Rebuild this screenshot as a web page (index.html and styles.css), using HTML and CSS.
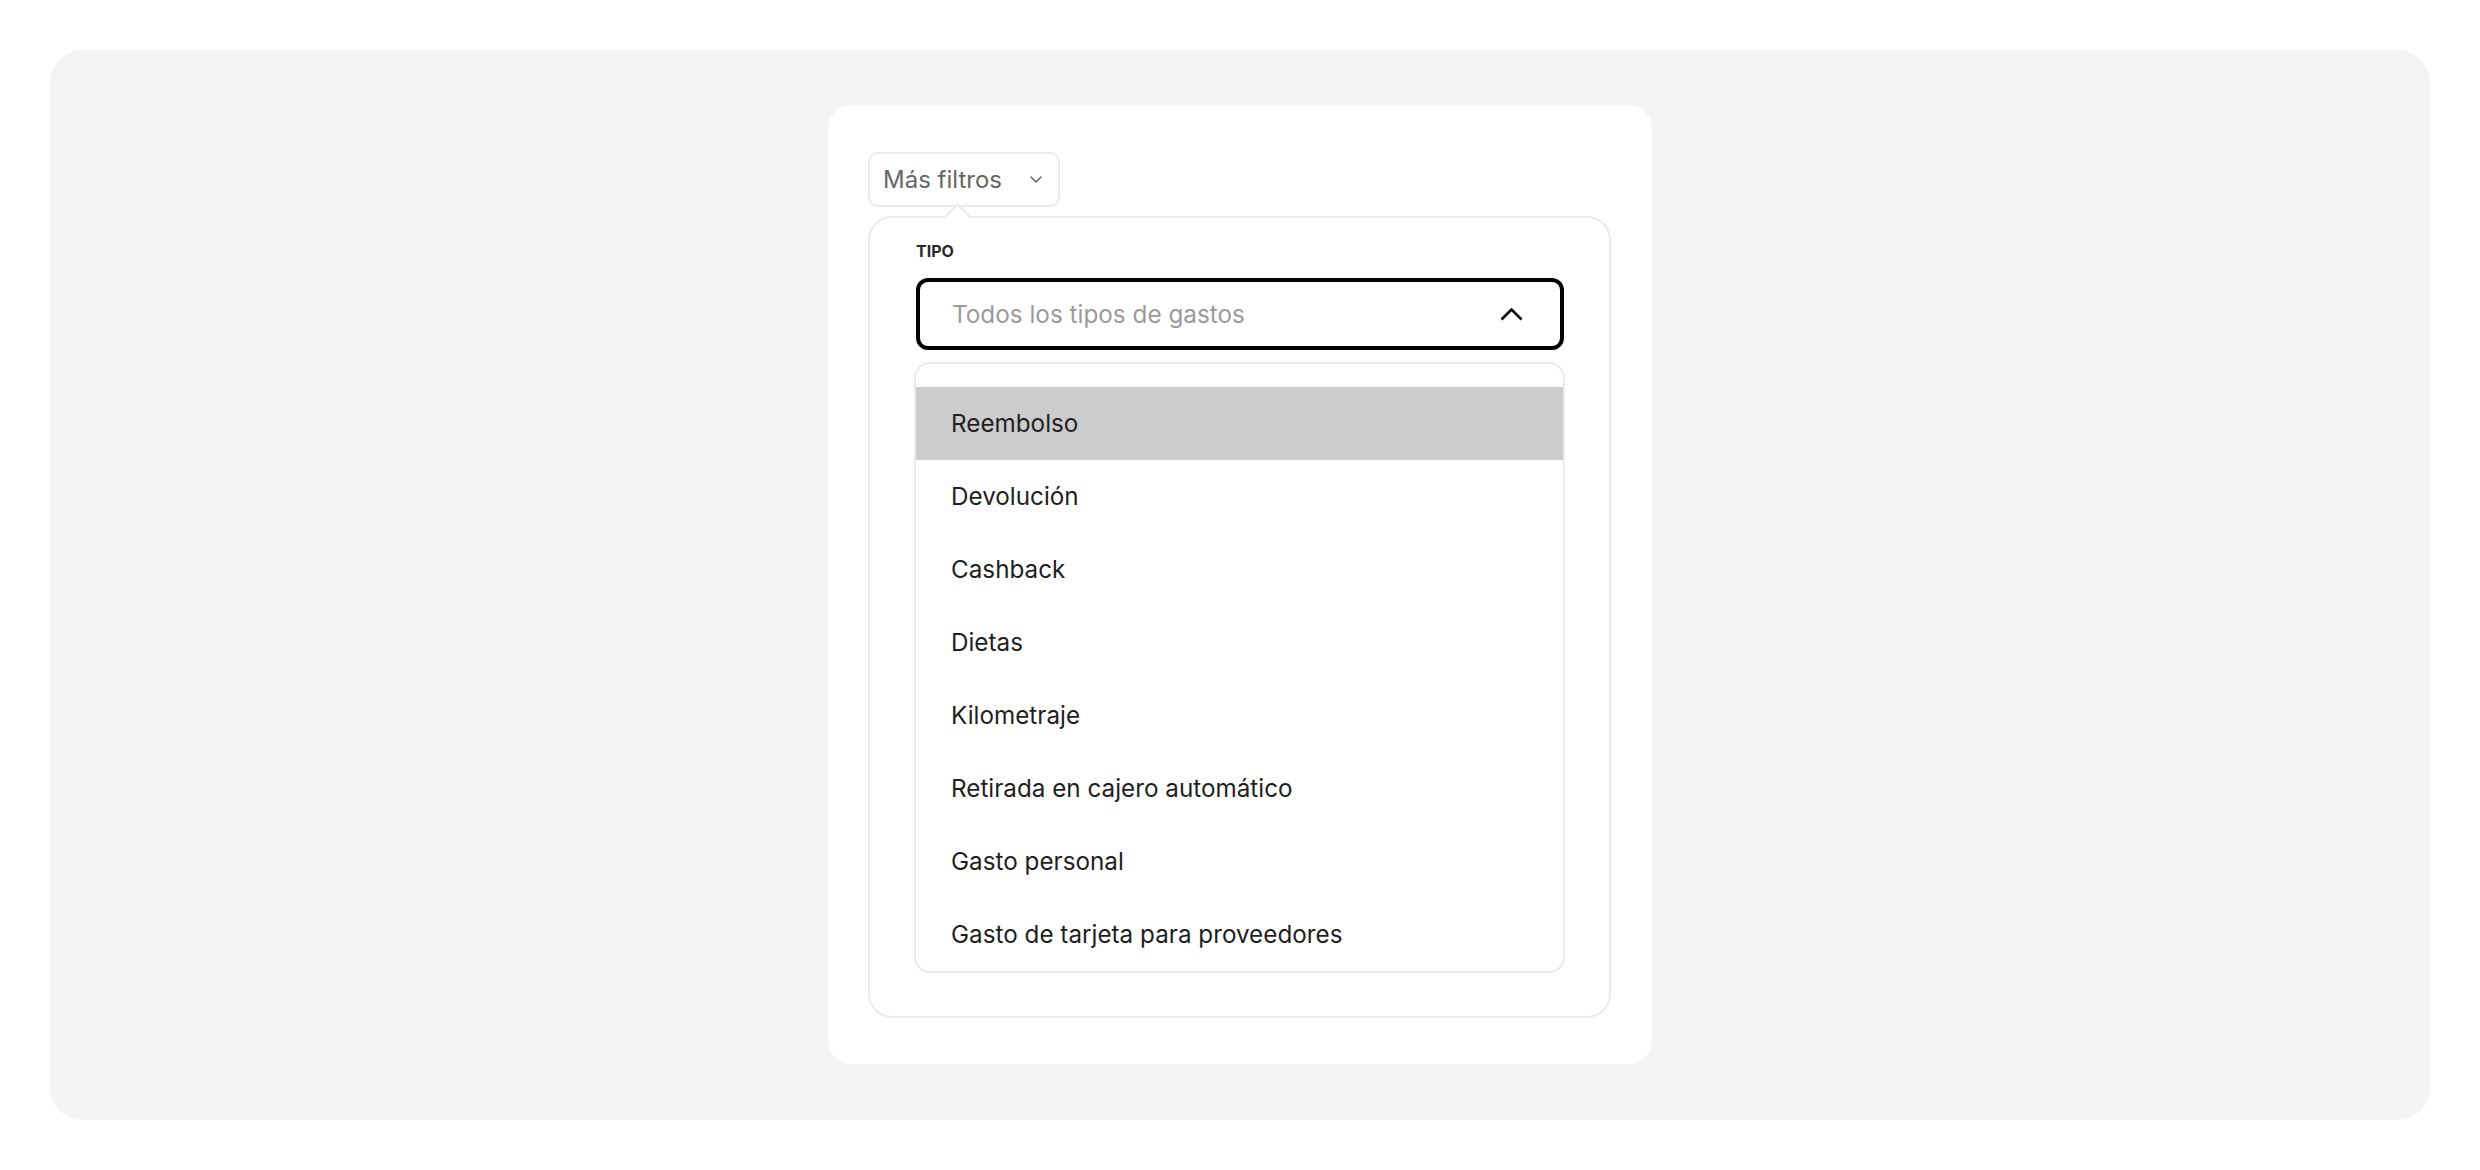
FILE: index.html
```html
<!DOCTYPE html>
<html lang="es">
<head>
<meta charset="utf-8">
<title>Más filtros</title>
<link rel="stylesheet" href="styles.css">
</head>
<body>
<div class="stage">
  <div class="card">
    <button class="trigger" type="button">
      <span class="trigger-label">Más filtros</span>
      <svg class="trigger-chevron" width="12" height="7" viewBox="0 0 12 7" aria-hidden="true"><path d="M1 1l5 5 5-5" fill="none" stroke="#666" stroke-width="1.5" stroke-linecap="round" stroke-linejoin="round"/></svg>
    </button>
    <div class="popover">
      <span class="popover-arrow"></span>
      <div class="field-label">TIPO</div>
      <div class="select">
        <span class="select-placeholder">Todos los tipos de gastos</span>
        <svg class="select-chevron" width="23" height="13" viewBox="0 0 23 13" aria-hidden="true"><path d="M1.5 11.5l10-10 10 10" fill="none" stroke="#000" stroke-width="2.6" stroke-linecap="butt" stroke-linejoin="miter"/></svg>
      </div>
      <ul class="listbox">
        <li class="option is-active">Reembolso</li>
        <li class="option">Devolución</li>
        <li class="option">Cashback</li>
        <li class="option">Dietas</li>
        <li class="option">Kilometraje</li>
        <li class="option">Retirada en cajero automático</li>
        <li class="option">Gasto personal</li>
        <li class="option">Gasto de tarjeta para proveedores</li>
      </ul>
    </div>
  </div>
</div>
</body>
</html>
```

FILE: styles.css
```css
* { box-sizing: border-box; }

html, body {
  margin: 0;
  padding: 0;
  background: #ffffff;
  font-family: Inter, "Noto Sans", "Liberation Sans", sans-serif;
}

.stage {
  margin: 50px;
  height: 1070px;
  background: #f4f4f4;
  border-radius: 32px;
  display: flex;
  justify-content: center;
  align-items: flex-start;
  padding-top: 55px;
}

.card {
  width: 824px;
  background: #ffffff;
  border-radius: 24px;
  padding: 47px 41px 46px 40px;
  display: flex;
  flex-direction: column;
  align-items: flex-start;
}

.trigger {
  width: 192px;
  height: 55px;
  border: 2px solid #ebebeb;
  border-radius: 10px;
  background: #ffffff;
  display: flex;
  align-items: center;
  justify-content: space-between;
  padding: 0 16px 0 13px;
  font-family: inherit;
  font-size: 24px;
  color: #666666;
  cursor: pointer;
}

.trigger-label { line-height: 1; }

.trigger-chevron { display: block; }

.popover {
  position: relative;
  margin-top: 9px;
  width: 743px;
  border: 2px solid #ebebeb;
  border-radius: 24px;
  background: #ffffff;
  padding: 24px 45px 43px 46px;
}

.popover-arrow {
  position: absolute;
  top: -11px;
  left: 78px;
  width: 19px;
  height: 19px;
  background: #ffffff;
  border-top: 2px solid #ebebeb;
  border-left: 2px solid #ebebeb;
  transform: rotate(45deg);
}

.field-label {
  font-size: 16px;
  font-weight: 700;
  line-height: 19px;
  color: #2a2a2a;
  margin-bottom: 17px;
}

.select {
  height: 72px;
  border: 4px solid #000000;
  border-radius: 12px;
  display: flex;
  align-items: center;
  justify-content: space-between;
  padding: 0 37px 0 32px;
}

.select-placeholder {
  font-size: 24.3px;
  color: #9a9a9a;
}

.select-chevron { display: block; }

.listbox {
  list-style: none;
  margin: 12px -1px 0 -2px;
  padding: 23px 0 0 0;
  border: 2px solid #ebebeb;
  border-radius: 16px;
  overflow: hidden;
}

.option {
  height: 73px;
  display: flex;
  align-items: center;
  padding-left: 35px;
  font-size: 24.25px;
  color: #1f1f1f;
}

.option.is-active {
  background: #cccccc;
}
```
